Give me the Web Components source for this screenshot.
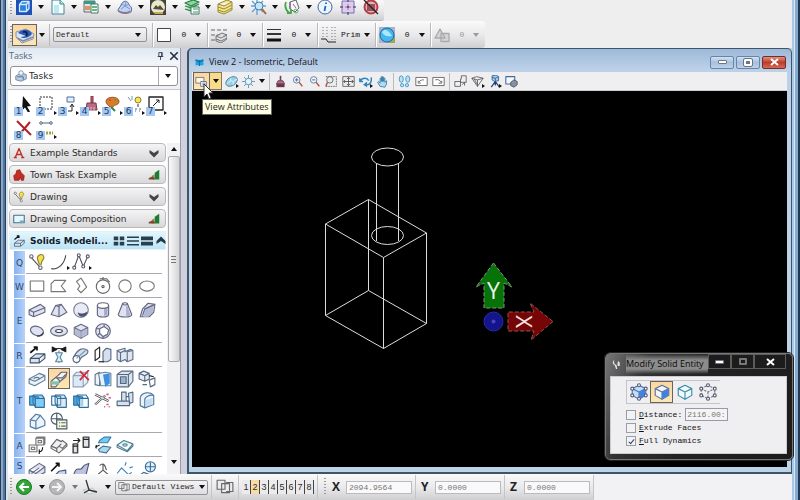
<!DOCTYPE html>
<html lang="en">
<head>
<meta charset="utf-8">
<title>View 2 - Isometric, Default</title>
<style>
html,body{height:100%;margin:0}
body{font:9px/12px "DejaVu Sans",sans-serif;color:#2b2b2b;background:#efeeef;overflow:hidden;
--mono:8px/12px "Liberation Mono",monospace;--segoe:"Open Sans",sans-serif;--bar:linear-gradient(#fbfafb,#e8e7e9 55%,#cfced0);--line:#b5b4b8}
</style>
</head>
<body>
<cad-app></cad-app>
<script>
const solid = 'stroke="#62667f" fill="#dfe2f2"';
const cube = (c, f) => `<g stroke="${c}" fill="${f}"><path d="M2 5l6-3 6 3v6l-6 3.500-6-3.500z"/><path d="M2 5l6 3 6-3M8 8v6.500" fill="none"/></g>`;
const overlap = (a, b) => `<path d="M1.500 4.500h8v8h-8z" fill="${a}" stroke="#2c6e9e"/><path d="M6.500 6.500h8v8h-8zM6.500 6.500l-2-3M14.500 6.500l-2-3h-8M4.500 3.500v7l2 4" fill="${b}" stroke="#2c6e9e"/>`;
const node = (x, y) => `<circle cx="${x}" cy="${y}" r="1.300" fill="#fff" stroke="#555a70"/>`;
const mag = '<path d="M10 9l4 5" stroke="#b4583c" stroke-width="1.800"/><circle cx="7" cy="6" r="4" fill="#eef5ff" stroke="#59698c"/>';
const ICONS = {
  model: '<path d="M0 0h16v16H0z" fill="#1d50b8"/><path d="M3.500 5.500h7v7h-7zM3.500 5.500l2.500-3h7l-2.500 3M13 2.500v7l-2.500 3" fill="#2f7fe0" stroke="#c9ecff" stroke-width="1.300"/>',
  page: '<path d="M2 1h8l4 4v10H2z" fill="#f4ffff" stroke="#4d7f96"/><path d="M10 1v4h4" fill="#9fc" stroke="#4d7f96"/><path d="M4 6h5v8H4z" fill="#bdeaf0"/>',
  refs: '<path d="M1 2h11v11H1z" fill="#d5ecdb" stroke="#667"/><path d="M1 2h11v3H1z" fill="#3a9a83"/><path d="M2 7h5v4H2z" fill="#e6906a"/><path d="M8 5h7v9H8z" fill="#fff" stroke="#476"/><path d="M9 8h5M9 11h5" stroke="#35a552" stroke-width="1.500"/>',
  cloud: '<path d="M1 12c0-3 2-3 3-6 2-5 7-5 8 0 3 2 3 4 2 7-3 2-10 2-13-1z" fill="#b7d7f2" stroke="#5d6298"/><path d="M4 10l4-3 5 3M8 7l1-4M5 5l3 2 4-2" stroke="#8c90c8"/><path d="M2 12c4 2 8 2 11 0" stroke="#b64d63"/>',
  raster: '<path d="M0 0h16v16H0z" fill="#44443d"/><circle cx="8" cy="8" r="7" fill="#e9e8cc"/><path d="M3 10l3-4 2 2 2-2 4 5z" fill="#4d4f38"/><path d="M3 13h10v2H5z" fill="#c9a955"/>',
  levels: '<path d="M1 4l8-3 6 2-8 4zM1 7l6 2 8-4M1 10l6 2 8-4" fill="#8bd89b" stroke="#27834a" stroke-width="1.300"/><path d="M7 8h8v7H7z" fill="#fff" stroke="#476"/><path d="M9 10h5M9 13h5" stroke="#2a9d4f"/>',
  layers: '<path d="M1 5l9-4 5 2-8 4zM1 5v3l6 2 8-4V3M1 8v3l6 2 8-4V6M1 11v2l6 2 8-4V9" fill="#f2e58d" stroke="#9a8a33"/>',
  sunfind: '<path d="M6 0v16M0 7h15M1 2l11 11M12 2L1 13" stroke="#62a3db" stroke-width="1.400"/><circle cx="8" cy="7" r="4" fill="#c2e9fa" stroke="#4a7ca8"/><path d="M11 10l4 5" stroke="#a8653c" stroke-width="2"/>',
  rotview: '<path d="M6 3l6-2 3 8-4 4-5-3zM6 3v7" fill="#f6f8fb" stroke="#5a6672"/><path d="M2 3c-2 5 0 8 3 11M3 14h4v-4" stroke="#46a648" stroke-width="1.800"/><path d="M9 5l3 4" stroke="#d2506a"/><circle cx="12" cy="12" r="2" stroke="#5b6"/>',
  info: '<circle cx="8" cy="8" r="7" fill="#eaf6ff" stroke="#49658f"/><path d="M8.500 7l-1 5M9 3.500v1.500" stroke="#2b63c0" stroke-width="1.800"/>',
  snap: '<path d="M2 2h12v12H2z" fill="#d9cdf1" stroke="#7d6cae"/><path d="M8 5v6M5 8h6" stroke="#9078bd"/><path d="M8 0v3M8 13v3M0 8h3M13 8h3" stroke="#333"/><path d="M7 7h2v2H7z" fill="#b33"/>',
  nosnap: '<circle cx="8" cy="8" r="6.500" fill="#e3b3b5" stroke="#b3404a" stroke-width="2"/><path d="M4 5h8v7H4z" fill="#9a525c"/><path d="M1 1l14 14" stroke="#222" stroke-width="1.300"/>',
  template: '<path d="M1 5l10-3 8 5-1 5-11 4-6-6z" fill="#d7e3f2" stroke="#8494b0"/><path d="M3 6c5-5 12-4 14 1-3 4-9 5-11 3l5-1z" fill="#2858b8"/><path d="M8 5c4-1 5 2 3 4" stroke="#111c33" stroke-width="1.500"/><path d="M2 11l6 3 10-4" stroke="#7d8ba5" stroke-width="1.500"/>',
  color: '<path d="M1.500 1.500h13v13h-13z" fill="#fff" stroke="#444"/>',
  style: '<path d="M0 3h16M0 8h16M0 13h8" stroke="#666" stroke-dasharray="4 2"/><path d="M5 9l6-3 5 2v4l-6 4-5-2zM5 9l5 2 6-3M5 12l5 2 6-3" fill="#dedfe4" stroke="#777"/>',
  weight: '<path d="M1 2.500h14" stroke="#333"/><path d="M1 7h14" stroke="#333" stroke-width="2"/><path d="M1 13h14" stroke="#111" stroke-width="3"/>',
  priority: '<path d="M2 0v12M6 0v12M11 0v13M14 0v13" stroke="#777" stroke-dasharray="1 2"/><path d="M0 12h5l2 3h8" stroke="#222"/>',
  trans: '<path d="M0 0h16v16H0z" fill="#a9b2cf"/><path d="M9 9h7v7H9z" fill="#98a95d"/><circle cx="8" cy="8" r="7" fill="#45b7ee" stroke="#19699e"/><path d="M3 5c3-5 8 0 10 4-5 1-8 0-10-4z" fill="#a9e8ff"/>',
  shapes: '<path d="M7 6.500h8v8H7zM1 11l5-9 5 9z" fill="#d4d3d6" stroke="#aaa" stroke-width="1.300"/>',
  person: '<path d="M1 8l7-4 7 2v6l-7 3-7-2z" fill="#b9cce1" stroke="#5f7691"/><circle cx="8" cy="4" r="3" fill="#f3f8fc" stroke="#6c84a1"/><path d="M3 9h8v4" stroke="#30597f"/>',
  pin: '<path d="M5 1h6v7H5zM3 8h10M8 8v6M10 1v7" stroke="#28364a" stroke-width="1.500"/>',
  cross: '<path d="M2 2l12 12M14 2L2 14" stroke="#222e40" stroke-width="2.500"/>',
  arrow: '<path d="M7 0l8 10-4 .5 3 5-2 1-3-5-3 3z" fill="#111"/>',
  fence: '<path d="M2 1h12v12H2z" stroke="#333" stroke-dasharray="2 1"/>',
  move: '<path d="M7 1h7v5H7z" fill="#e3eefb" stroke="#4e719d"/><path d="M8 15h4V9M10 11l2-3 2 3" stroke="#222"/>',
  brush: '<path d="M9 0h2v7H9z" fill="#d3606d" stroke="#842f3f"/><path d="M5 7h9l1 7H4z" fill="#b86d80" stroke="#743a53"/><path d="M6 11v4M9 11v4M12 11v4" stroke="#e9bac5"/>',
  palette: '<path d="M2 5c1-5 12-5 13 0 0 5-5 3-6 6-1 2-7-2-7-6z" fill="#d97b2a" stroke="#9b5420"/><circle cx="6" cy="4" r="1" fill="#e33"/><circle cx="11" cy="4" r="1" fill="#4a4"/><path d="M7 11l4 4" stroke="#384" stroke-width="2"/>',
  lights: '<path d="M2 1l3 4M6 0v4M10 3" stroke="#69a"/><circle cx="12" cy="4" r="3" fill="#f6e65a" stroke="#8d802e"/><path d="M11 8h2v3h-2z" fill="#999"/><path d="M9 13h2M13 13h2M9 15h1M13 15h1" stroke="#568"/>',
  scale: '<path d="M1 1h14v13H1z" stroke="#222" stroke-width="1.300"/><path d="M5 10l6-6M8 4h3v3" stroke="#222"/>',
  del: '<path d="M1 1l14 14M14 2L3 15" stroke="#b3202b" stroke-width="2"/>',
  measure: '<path d="M3 3h10" stroke="#567"/><circle cx="3" cy="3" r="1.300" fill="#fff" stroke="#567"/><circle cx="13" cy="3" r="1.300" fill="#fff" stroke="#567"/><path d="M5 13h10" stroke="#a7a13c" stroke-width="3" stroke-dasharray="2 1"/>',
  letterA: '<path d="M3 14L8 2l5 12M5 10h6M1 14h4M11 14h4" stroke="#c03026" stroke-width="1.800"/>',
  town: '<path d="M2 15L1 9l3-3 1-4 4-1 2 4 4 4-1 6h-3l-1-4-2 4z" fill="#c42d22" stroke="#8a1b17"/>',
  draw: '<path d="M2 3l9 10" stroke="#555"/><circle cx="3" cy="3" r="1.500" fill="#fff" stroke="#667"/><circle cx="11" cy="13" r="1.500" fill="#fff" stroke="#667"/><path d="M9 7c-3-6 6-8 5-2l-2 3v2h-2z" fill="#f3e04c" stroke="#8c8135"/>',
  sheet: '<path d="M1 3h14v10H1z" fill="#e8f6ff" stroke="#3c7491" stroke-width="1.400"/><path d="M9 10h6v3H9z" fill="#7ab"/>',
  extrude: '<path d="M2 6l6-5M5 1h3v3" stroke="#111" stroke-width="1.500"/><path d="M2 11l5-4h8l-5 4zM2 11v4h8v-4M10 15l5-4V7" fill="#d9e3ef" stroke="#42536d"/>',
  chevdown: '<path d="M2 4l6 4 6-4v4l-6 6-6-6z" fill="#444"/>',
  chevup: '<path d="M2 12l6-4 6 4V8L8 2 2 8z" fill="#24384b"/>',
  stairs: '<path d="M9 5l6-4v13H9z" fill="#1f7a34"/><path d="M5 9l4-2v7H5z" fill="#77a44a"/><path d="M1 12l5-2 3 2v2H1z" fill="#8b3d37"/>',
  grid4: '<path d="M1 2h6v5H1zM9 2h6v5H9zM1 9h6v5H1zM9 9h6v5H9z" fill="#273f4e"/>',
  list: '<path d="M0 3h16M0 8h16M0 13h16" stroke="#273f4e" stroke-width="2"/>',
  wide: '<path d="M0 2h16v5H0zM0 9h16v5H0z" fill="#273f4e"/>',
  arc: '<path d="M1 14c7 1 12-5 13-12" stroke="#444"/>',
  curve: '<path d="M2 13L6 2l4 10 4-9" stroke="#555"/>'+node(2,13)+node(6,2)+node(10,12)+node(14,3),
  rect: '<path d="M2 3.500h12v9H2z" stroke="#777"/>',
  poly: '<path d="M1 13V6l3-3h10l-4 5 4 5z" stroke="#777"/>',
  orth: '<path d="M4 4l4-3 2 3 3 5-5 5-3-3 2-3z" stroke="#777"/>',
  regpoly: '<circle cx="8" cy="8.500" r="6" stroke="#666"/><circle cx="8" cy="8.500" r="1" stroke="#555"/><path d="M8 2.500V0M5 1.500h6l3 3" stroke="#666"/>',
  circle: '<circle cx="8" cy="8" r="5.500" stroke="#777"/>',
  ellipse: '<ellipse cx="8" cy="8" rx="6.500" ry="4.500" stroke="#777"/>',
  slab: `<path d="M1 8l10-5 4 3v4L5 14l-4-2z" ${solid}/><path d="M1 8l4 2 10-4M5 10v4" stroke="#62667f"/>`,
  wedge: `<path d="M1 12l4-8 5-1 5 7-7 4z" ${solid}/><path d="M5 4l3 1 2-2M8 5v9" stroke="#62667f"/>`,
  sphere: '<circle cx="8" cy="8" r="6.500" fill="#e8eaf6" stroke="#7b7f98"/><path d="M5 10c3 2 6 1 9-1-1 6-8 7-9 1z" fill="#4d5270"/>',
  cylinder: `<path d="M3 4v8c0 3 10 3 10 0V4" ${solid}/><path d="M9 5h3v8H9z" fill="#a4a8c4"/><ellipse cx="8" cy="4" rx="5" ry="2.500" fill="#fff" stroke="#62667f"/>`,
  cone: `<path d="M6 2L2 12c0 3 12 3 12 0L10 2z" ${solid}/><path d="M9 4h1l3 9-4 1z" fill="#aeb2cc"/><ellipse cx="8" cy="2.500" rx="2" ry="1" fill="#fff" stroke="#62667f"/>`,
  quad: `<path d="M2 14l2-7 5-5 6 1-1 7-4 4z" ${solid}/><path d="M6 7l8-4-1 7-4 4H5z" fill="#b3b8d6"/><path d="M4 13l2-6 9-4" stroke="#62667f"/>`,
  ellipsoid: `<ellipse cx="8" cy="8" rx="6" ry="4" transform="rotate(20 8 8)" ${solid}/><path d="M8 12.500c3 0 5-1 5.500-3" stroke="#444" stroke-width="1.300"/>`,
  torus: `<ellipse cx="8" cy="8" rx="7.500" ry="4.500" ${solid}/><ellipse cx="8" cy="8" rx="3" ry="1.300" fill="#fff" stroke="#444"/>`,
  cube: cube('#6b6e88', '#e3e5f2') + '<path d="M8.500 8.500l5-2.500v5l-5 3zM2.500 6L7.500 8.500V14l-5-3z" fill="#b5b9d2"/>',
  dodeca: `<circle cx="8" cy="8" r="6.500" ${solid}/><path d="M5 6l4-2 4 3-1 4-4 2-3-3zM5 6L2 6M9 4V2M5 10l-2 2M8 13v2" fill="#fff" stroke="#62667f"/>`,
  revolve: '<path d="M2 3c4-1 8-1 12 0" stroke="#222"/><path d="M2 1v4l4-2zM14 1v4l-4-2z" fill="#111" stroke="#222"/><path d="M8 4v11" stroke="#58a"/><path d="M5 6h6l-2 4 2 4H5l2-4z" fill="#dfeaf5" stroke="#56889a"/>',
  pipe: '<path d="M1 11C5 2 10 1 14 4c1 3-2 4-4 5-3 1-3 5-6 6z" fill="#d7dfef" stroke="#596984"/><circle cx="4" cy="11.500" r="3" fill="#fff" stroke="#596984"/><path d="M4 11l8-7" stroke="#79a"/>',
  sweep: '<path d="M1 4l4-3v9l-4 3z" stroke="#222"/><path d="M8 5l3-3 4 1v9l-3 2H8z" fill="#d7dfef" stroke="#596984"/><path d="M4 14h5" stroke="#222"/>',
  thicken: '<path d="M1 4l7-2v3l5-2 2 1v8l-5 2-2-2-4 2-3-2z" fill="#dfe6f2" stroke="#5f6e88"/><path d="M1 4l3 2 4-2M4 6v8M10 5v9M10 5l5-1" stroke="#5f6e88"/>',
  slab2: '<path d="M1 8l9-5 5 2v4L6 14l-5-2z" fill="#ecf1f7" stroke="#5a7c98"/><path d="M1 8l5 2 4-2 5-3M5 8c1-2 5-2 5 0" stroke="#5a7c98"/>',
  modify: '<path d="M1 10l6-5 3-3h5l-1 4-5 4-4 5H1z" fill="#eff3f6" stroke="#68606c"/><path d="M5 7h6l3-3M9 10l-3-3" stroke="#68606c"/><path d="M1 10h7v3H1z" fill="#81c4ab"/>',
  delent: '<path d="M1 5h9v10H1zM1 5l3-3h10l-4 3M14 2v9l-4 4" fill="#dce9f6" stroke="#8fa3bb"/><path d="M7 1l8 8M15 0L7 9" stroke="#d22a3a" stroke-width="1.600"/>',
  fillet: '<path d="M1 4l4-2v12l-4-1z" fill="#eef3f8" stroke="#57728f"/><path d="M4 3l6-1 5 1v11H6z" fill="#eaf3fb" stroke="#6d869f"/><path d="M8 4l6-1v9l-4 3z" fill="#3f8fe0"/>',
  shell: '<path d="M1 4l4-3h10v9l-4 5H1z" fill="#dce5f0" stroke="#566a82"/><path d="M1 4h10v11M11 4l4-3" stroke="#566a82"/><path d="M4 6h5v6H4z" fill="#9bb2cc" stroke="#566a82"/>',
  cutout: '<path d="M1 3l4-2 5 2v5l-4 2-5-2zM1 3l5 2 4-2M6 5v5" fill="#e7edf4" stroke="#566a82"/><path d="M10 9l5-2v6l-4 2zM4 13h4" stroke="#566a82"/><path d="M10 5l4 1" stroke="#222"/>',
  unite: overlap('#56b5ee', '#81cdf6'),
  intersect: overlap('#fff', '#a9c9e266'),
  subtract: overlap('#45a8e8', '#f7fbff99'),
  trim: '<path d="M1 3l12 6M1 12l9-8" stroke="#555" stroke-width="2"/><path d="M1 3l12 6M1 12l9-8" stroke="#fff" stroke-width=".8"/><path d="M11 3h2M13 6h2M11 12h2M13 14h1M9 14h1" stroke="#d3557d" stroke-width="1.500"/>',
  imprint: '<path d="M5 1h4v8H5zM11 2l4-1v9l-3 1zM1 9h11v4H1zM9 5h3" fill="#d7e2ed" stroke="#536a84"/>',
  blend: '<path d="M2 6c1-5 9-6 12-2v8l-8 3-4-2z" fill="#ecf4fb" stroke="#5178a0"/><path d="M6 15V8c0-3 5-5 8-4" stroke="#5178a0"/><path d="M7 14V8l6-2v6z" fill="#c6ddf1"/>',
  chamfer: '<path d="M2 7l5-5 4 1 4 5v4l-8 3-5-2z" fill="#ecf4fb" stroke="#5178a0"/><path d="M2 7l5 1 4-5M7 8v7" stroke="#5178a0"/>',
  props: '<circle cx="6" cy="6" r="5" stroke="#46596b"/><path d="M1 6h9M6 1v9" stroke="#46596b"/><path d="M6 7h9v8H6z" fill="#f6f8dc" stroke="#46596b"/><path d="M8 9.500h1M8 12.500h1M10 9.500h4M10 12.500h4" stroke="#566"/>',
  align: '<path d="M7 2h7v6H7zM1 8h7v6H1zM7 2l1-1h7v6l-1 1M9 4h3v2H9zM3 10h3v2H3z" fill="#f4f4f6" stroke="#777"/><path d="M13 10c0 3-1 4-3 4M10 12v4" stroke="#111"/>',
  unfold: '<path d="M1 9l5-6 4 2 1-1 4 3v2l-7 6-7-4z" fill="#f0f1f3" stroke="#666"/><path d="M1 9l5 2 4-4M6 11v3M8 9l3 2 4-4" stroke="#666"/>',
  copy: '<path d="M1 7h4v8H1zM10 1h5v9h-5z" fill="#dfe5ec" stroke="#444" stroke-width="1.300"/><path d="M1 4h6M5 2l2 2-2 2M1 9h4M10 3h5" stroke="#222"/>',
  project: '<path d="M5 4l4-3h6l-3 5H4z" fill="#75c9f4" stroke="#3382ae"/><path d="M4 12l4-3 7 1-4 5-6-1z" fill="#a7daf1" stroke="#4c6f8c"/><path d="M1 10l4-2M2 8v3" stroke="#222"/>',
  flat: '<path d="M1 8l6-4 8 3-5 6zM1 8v2l9 4 5-5V7" fill="#e4f5f8" stroke="#4e8192"/><ellipse cx="8" cy="8" rx="2" ry="1" stroke="#4e8192"/>',
  surf: '<path d="M1 9l9-6 5 3v5l-8 4H1zM1 9l6 3 8-6M3 12l7-5" fill="#dfe3f1" stroke="#626a86"/>',
  lineArrow: '<path d="M1 10l7-7M5 3h3v3" stroke="#111" stroke-width="1.400"/><path d="M3 15l5-5 6-1v6z" fill="#ccd2ea" stroke="#505878"/>',
  mound: '<path d="M1 15C4 3 7 11 9 7s5-3 6-4l-3 12z" fill="#bcc2df" stroke="#505878"/>',
  bend: '<path d="M1 15l7-6V3M8 9l6 5M5 5c3-3 5-1 6 4" stroke="#555"/>',
  spark: '<path d="M1 12l4-5 6 6 3-2M8 5l1-3M12 7l3-1" stroke="#3c83b5"/>',
  mesh: '<circle cx="11" cy="6" r="4.500" stroke="#386b95" fill="#dff3ff"/><path d="M7 6h8M11 2v8M1 14l4-3 8 3" stroke="#386b95"/>',
  attr: '<path d="M1 3h10v7H1z" fill="#fff7df" stroke="#667"/><path d="M7 8h7v6H7z" fill="#fff" stroke="#667"/><path d="M9 10h4M9 12h4" stroke="#2a74c8"/>',
  display: '<path d="M1 11c0-5 4-8 9-9 6 0 6 4 4 7-3 5-11 7-13 2z" fill="#9bd0ea" stroke="#336e8e"/><path d="M2 11l5-4 3 1 5-3M7 7V4M10 8v4" stroke="#e4f7ff"/>',
  sun: '<path d="M8 0v16M0 8h16M2.500 2.500l11 11M13.500 2.500l-11 11" stroke="#5b83a3"/><circle cx="8" cy="8" r="4" fill="#e2f4ff" stroke="#4987ac"/>',
  update: '<path d="M7 1h2v6H7z" fill="#6d414f"/><path d="M5 7h6l2 4H3z" fill="#aa7182" stroke="#62394a"/><path d="M3 11h10v4H3z" fill="#71324f"/>',
  zoomin: mag + '<path d="M5 6h4M7 4v4" stroke="#2656a8"/>',
  zoomout: mag + '<path d="M5 6h4" stroke="#2656a8"/>',
  window: '<path d="M1 2h13v12H1" stroke="#555" stroke-dasharray="2 1"/><circle cx="6" cy="6" r="4" fill="#e4eaf3" stroke="#555"/><path d="M3 9l-2 5" stroke="#b4583c" stroke-width="1.800"/>',
  fit: '<path d="M1 2h14v12H1z" stroke="#555"/><path d="M8 3v10M2 8h12M6 5l2-2 2 2M6 11l2 2 2-2M4 6L2 8l2 2M12 6l2 2-2 2" stroke="#444"/>',
  rotate: '<path d="M1 8c3-5 9-5 11-1M1 4v4h4M15 3c1 6-2 10-7 9" stroke="#2f86bd" stroke-width="1.800"/><path d="M10 8v7l-5-3z" fill="#2f86bd"/>',
  hand: '<path d="M5 14L2 9l1-1 2 2V4h1.500v4V2H8v6V2.500h1.500V8V4H11v5l2-2v4l-2 4z" fill="#acdcf6" stroke="#3776a2"/>',
  walk: '<ellipse cx="4" cy="5" rx="2.500" ry="4" fill="#b9e3f8" stroke="#3a8bbc"/><ellipse cx="12" cy="5" rx="2.500" ry="4" fill="#b9e3f8" stroke="#3a8bbc"/><circle cx="5" cy="12.500" r="2" fill="#b9e3f8" stroke="#3a8bbc"/><circle cx="11" cy="12.500" r="2" fill="#b9e3f8" stroke="#3a8bbc"/>',
  prev: '<path d="M1 3h14v10H1z" fill="#fff" stroke="#555"/><path d="M5 9c1-3 4-3 6-3M4 7v3h3" stroke="#555"/>',
  next: '<path d="M1 3h14v10H1z" fill="#fff" stroke="#555"/><path d="M4 6c3-1 6 0 7 3M8 10h4V7" stroke="#555"/>',
  copyview: '<path d="M1 8h7v6H1zM9 1h6v8H8V5h1zM10 12l3-3M13 9v4" stroke="#555"/>',
  clip: '<path d="M1 4l6-2 8 2-7 10zM1 4l7 2 7-2M8 6v8M4 5l4 7" stroke="#555"/>',
  camera: '<path d="M5 1l5-1 3 2v5l-5 1-3-2z" fill="#a9cced" stroke="#27598e"/><path d="M5 3l4 1 4-2M9 4v4" stroke="#27598e"/><path d="M9 8l-5 7M9 8l5 7M9 8v5" stroke="#1f3f70" stroke-width="1.500"/>',
  mask: '<path d="M1 2h11v9H1z" fill="#f6f8ff" stroke="#456a91" stroke-width="1.300"/><path d="M7 9l4-3 4 2v4l-4 3-4-2z" fill="#8792a0" stroke="#43505f"/>',
  back: '<circle cx="8" cy="8" r="7.500" fill="#30a436" stroke="#197a24"/><path d="M13 8H4M8 4L4 8l4 4" stroke="#fff" stroke-width="2"/>',
  fwd: '<circle cx="8" cy="8" r="7.500" fill="#b7b7b9" stroke="#99999d"/><path d="M3 8h9M8 4l4 4-4 4" stroke="#f4f4f4" stroke-width="2"/>',
  acs: '<path d="M1 11l6 4 8-2-5-4z" stroke="#bcc" fill="#ececf1"/><path d="M4 1l3 10 8 2M7 11l-5 3" stroke="#333" stroke-width="1.300"/>',
  views: '<path d="M1 2h7v8H1zM5 5h7v8H5zM9 4h6v8H9" fill="#ececee" stroke="#666"/>',
  app: '<path d="M1 3h6l1 1 1-1h6v10H9l-1 1-1-1H1z" fill="#1aa6d8"/><path d="M8 4v10M1 3l7 4 7-4" stroke="#1766a8" stroke-width="2"/>',
  pick: '<path d="M5 1c-3 4-3 7 1 9l2 6h2l-1-6-4-3zM12 3c-2 3-2 5-1 8h3V6z" fill="#e4e4e4"/>',
  faceVert: cube('#5179b5', '#c3dcf8') + '<path d="M8 8l6-3v6l-6 3.500z" fill="#4582de"/>' + node(2,5)+node(8,2)+node(14,5)+node(2,11)+node(8,14)+node(14,11),
  face: cube('#61749d', '#f2f5fb') + '<path d="M8 8l6-3v6l-6 3.500z" fill="#437fdf"/>',
  edge: cube('#388cad', '#f3fbfd'),
  vertex: '<path d="M2 5l6-3 6 3v6l-6 3-6-3zM2 5l6 3 6-3M8 8v6" stroke="#778" stroke-dasharray="2 1"/>' + node(2,5)+node(8,2)+node(14,5)+node(2,11)+node(8,14)+node(14,11)
};

const define = (name, html) => {
  const tpl = document.createElement('template');
  customElements.define(name, class extends HTMLElement {
    constructor() { super(); this.attachShadow({ mode: 'open' }); }
    connectedCallback() {
      if (this.shadowRoot.firstChild) return;
      tpl.innerHTML = '<style>*{box-sizing:border-box}:host{display:block;box-sizing:border-box}button{font:inherit;color:inherit;margin:0;padding:0;border:0;background:none}</style>' + (typeof html === 'function' ? html(this) : html);
      this.shadowRoot.append(tpl.content.cloneNode(true));
    }
  });
};
const a = (el, n, d = '') => el.getAttribute(n) ?? d;

define('ui-icon', el => `<style>:host{display:block;flex:none;width:${a(el,'size','16')}px;height:${a(el,'size','16')}px}svg{display:block;width:100%;height:100%;fill:none;stroke-linejoin:round}</style>
<svg viewBox="0 0 ${a(el,'name')==='template'?20:16} 16" aria-hidden="true">${ICONS[a(el,'name')]}</svg>`);

define('drop-arrow', el => `<style>:host{display:flex;flex:none}button{width:9px;height:16px;display:grid;place-items:center}i{border:3px solid transparent;border-top:4px solid ${a(el,'tone','#111')};border-bottom:0}</style><button aria-label="${a(el,'label','More')}"><i></i></button>`);

define('tool-button', el => `<style>:host{position:relative;flex:none}
button{display:grid;place-items:center;place-content:center;width:${a(el,'w','22')}px;height:${a(el,'h','22')}px;border:1px solid transparent}
:host([active]) button{border-color:#6a645c;background:linear-gradient(#fbd7a2,#fbe7b4)}
b{position:absolute;left:1px;bottom:1px;width:9px;height:9px;background:#a5c8f2;color:#173a67;font:9px/9px "DejaVu Sans",sans-serif;text-align:center}
i{position:absolute;right:0;bottom:2px;border:2px solid transparent;border-left:3px solid #111;border-right:0}</style>
<button aria-label="${a(el,'label',a(el,'icon'))}"><ui-icon name="${a(el,'icon')}" size="${a(el,'size','16')}"></ui-icon></button>${el.hasAttribute('key')?`<b>${a(el,'key')}</b>`:''}${el.hasAttribute('fly')?'<i></i>':''}`);

define('grip-dots', `<style>:host{width:2px;height:18px;flex:none;background:repeating-linear-gradient(#999 0 1px,transparent 1px 3px)}</style>`);

define('drop-select', el => `<style>:host{min-width:0}
label{display:grid;grid-template-columns:auto 1fr auto;align-items:center;height:${a(el,'h','15')}px;border:1px solid #929196;border-radius:${a(el,'radius','2')}px;background:${a(el,'bg','linear-gradient(#f4f3f4,#dedde0)')};overflow:hidden}
ui-icon{margin-left:${a(el,'im','2')}px}select{appearance:none;width:100%;min-width:0;border:0;background:none;font:inherit;color:inherit;padding:0 2px;height:12px}
span{display:grid;place-items:center;height:100%;width:${a(el,'aw','16')}px;${el.hasAttribute('split')?'border-left:1px solid #aab;':''}}span i{border:${a(el,'tri','3')}px solid transparent;border-top:4px solid #111;border-bottom:0}</style>
<label>${el.hasAttribute('icon')?`<ui-icon name="${a(el,'icon')}" size="${a(el,'isize','12')}"></ui-icon>`:'<s></s>'}<select aria-label="${a(el,'label')}"><option>${a(el,'value')}</option></select><span><i></i></span></label>`);

define('attr-group', el => `<style>:host{display:grid;grid-template-columns:18px 1fr 9px;align-items:center;gap:2px;padding:0 4px 0 3px;border-left:1px solid #b9b8bc;box-shadow:inset 1px 0 #fff;height:24px;font:var(--mono);color:${a(el,'tone','#111')}}span{text-align:center}</style>
<ui-icon name="${a(el,'icon')}"></ui-icon><span>${a(el,'value','0')}</span><drop-arrow tone="${a(el,'tone','#111')}" label="${a(el,'icon')}"></drop-arrow>`);

define('top-bars', () => {
  const drops = ['model','page','refs','cloud','raster','levels','layers','sunfind','rotview'];
  return `<style>.r{display:flex;align-items:center;background:var(--bar);border-radius:0 3px 3px 0;padding-left:2px}
.one{width:376px;height:21px;padding-bottom:6px;border-bottom:1px solid #bcbbc0}.two{width:477px;height:27px}
.g{flex:1;display:grid;grid-template-columns:repeat(9,1fr);margin-left:3px}.g>div{display:flex;align-items:center;gap:3px}.x{display:flex;gap:7px;padding-right:5px}
.sel{width:94px;font:var(--mono)}.sp{width:1px;height:22px;background:#b9b8bc;margin:0 3px}.a{flex:1;display:grid;grid-template-columns:repeat(6,1fr);margin-left:5px}</style>
<div class="r one"><grip-dots></grip-dots><div class="g">${drops.map(n=>`<div><tool-button icon="${n}" w="18" h="16"></tool-button><drop-arrow></drop-arrow></div>`).join('')}</div>
<div class="x">${['info','snap','nosnap'].map(n=>`<tool-button icon="${n}" w="16" h="16"></tool-button>`).join('')}</div></div>
<div class="r two"><grip-dots></grip-dots><tool-button active icon="template" size="20" w="25" h="22" label="Active template"></tool-button><drop-arrow></drop-arrow><i class="sp"></i>
<drop-select class="sel" label="Active level" value="Default"></drop-select>
<div class="a"><attr-group icon="color"></attr-group><attr-group icon="style"></attr-group><attr-group icon="weight"></attr-group><attr-group icon="priority" value="Prim"></attr-group><attr-group icon="trans"></attr-group><attr-group icon="shapes" tone="#9b9a9e"></attr-group></div></div>`;
});

define('task-category', el => `<style>button{width:100%;height:19px;display:grid;grid-template-columns:12px 1fr auto;gap:5px;align-items:center;padding:0 5px 0 3px;text-align:left;white-space:nowrap;border:1px solid #b9b8bb;border-radius:4px;background:linear-gradient(#f5f4f5,#d9d8da)}
:host([open]) button{border-color:#e2f3fb;border-radius:0;background:linear-gradient(#e3f6fd,#bde4f5);font-weight:bold;color:#10202c}
.e{display:flex;gap:2px;align-items:center}</style>
<button aria-expanded="${el.hasAttribute('open')}"><ui-icon name="${a(el,'icon')}" size="12"></ui-icon><slot></slot><span class="e">${a(el,'end').split(' ').map(n=>`<ui-icon name="${n}" size="12"></ui-icon>`).join('')}</span></button>`);

define('task-row', el => `<style>:host{display:grid;grid-template-columns:11px 1fr}
b{display:grid;place-items:center;background:linear-gradient(90deg,#86b3f1,#b8d2f8);color:#33456a;font-weight:normal}
:host([last]) b{place-items:start center;padding-top:2px}
div{display:grid;grid-template-columns:repeat(6,22px);grid-auto-rows:21px;margin-left:1px;padding-bottom:1px;border-bottom:1px solid #a9a8ae}</style>
<b>${a(el,'key')}</b><div>${a(el,'icons').split(' ').map(n=>{const [i,f]=n.split(':');return `<tool-button icon="${i}" size="18" h="21" ${f==='on'?'active':f==='fly'?'fly':''}></tool-button>`}).join('')}</div>`);

define('task-panel', () => `<style>:host{display:flex;flex-direction:column;min-height:0;background:#fff;border-right:1px solid #9a99aa}
header{display:flex;align-items:center;gap:4px;height:16px;flex:none;padding:0 1px 0 1px;color:#50647c;background:linear-gradient(#dfe8f1,#f3f6fa);font-family:var(--segoe)}header span{flex:1}
.top{padding:2px 2px 3px;background:#eff1f5;border-bottom:1px solid #c9c8cc}
.keys{display:grid;grid-template-columns:repeat(7,22px);grid-auto-rows:24px;padding:3px 5px 0;height:53px;flex:none}
.body{flex:1;min-height:0;display:grid;grid-template-columns:1fr 13px;gap:1px;padding-left:1px}
.cats{min-height:0;overflow:hidden;display:flex;flex-direction:column;gap:3px}.rows{margin:-2px 4px 0 5px;display:grid;gap:1px}
.sb{display:flex;flex-direction:column;align-items:center;background:#f2f1f3;padding:4px 0 10px}.u{border:3px solid transparent;border-bottom:4px solid #111;border-top:0}.d{border:3px solid transparent;border-top:4px solid #111;border-bottom:0}
.t{width:12px;height:206px;margin-top:5px;border:1px solid #a9a8ac;border-radius:2px;background:linear-gradient(90deg,#fafafa,#d5d4d7);display:grid;place-items:center}.t i{width:5px;height:7px;background:repeating-linear-gradient(#777 0 1px,transparent 1px 3px)}.f{flex:1}</style>
<header><span>Tasks</span><tool-button icon="pin" size="9" w="9" h="12" label="Pin"></tool-button><tool-button icon="cross" size="10" w="10" h="12" label="Close"></tool-button></header>
<div class="top"><drop-select icon="person" im="4" label="Task" value="Tasks" h="20" radius="3" bg="#fff" aw="19" split></drop-select></div>
<div class="keys">${['arrow','fence','move','brush','palette','lights','scale','del','measure'].map((n,i)=>`<tool-button icon="${n}" key="${i+1}" ${i&&i!==7?'fly':''}></tool-button>`).join('')}</div>
<div class="body"><div class="cats">
<task-category icon="letterA" end="chevdown">Example Standards</task-category>
<task-category icon="town" end="stairs">Town Task Example</task-category>
<task-category icon="draw" end="chevdown">Drawing</task-category>
<task-category icon="sheet" end="stairs">Drawing Composition</task-category>
<task-category open icon="extrude" end="grid4 list wide chevup">Solids Modeli...</task-category>
<div class="rows">
<task-row key="Q" icons="draw arc:fly curve:fly"></task-row>
<task-row key="W" icons="rect poly orth regpoly circle ellipse"></task-row>
<task-row key="E" icons="slab wedge sphere cylinder cone quad ellipsoid torus cube dodeca"></task-row>
<task-row key="R" icons="extrude revolve pipe sweep thicken"></task-row>
<task-row key="T" icons="slab2 modify:on delent fillet shell cutout unite intersect subtract trim imprint blend chamfer props"></task-row>
<task-row key="A" icons="align unfold copy project flat"></task-row>
<task-row key="S" last icons="surf lineArrow mound bend spark mesh"></task-row>
</div></div><div class="sb"><i class="u"></i><div class="t"><i></i></div><div class="f"></div><i class="d"></i></div></div>`);

define('cad-scene', `<style>:host{background:#000;min-height:0;overflow:hidden}svg{display:block;width:100%;height:100%}</style>
<svg role="img" aria-label="Wireframe solid with axis triad"><g transform="translate(-192 -91)">
<g fill="none" stroke="#dcdcdc" stroke-width="1"><path d="M325.500 224L368.500 199.500 426.500 233 383.500 257.500zM325.500 315.500L368.500 290.500 426.500 323.500 383.500 348.500zM325.500 224v91.500M368.500 199.500v91M426.500 233v90.500M383.500 257.500v91M376.500 163v78M398.500 163v78"/><ellipse cx="387.500" cy="157" rx="16" ry="9"/><ellipse cx="387.500" cy="235.500" rx="16" ry="9"/></g>
<g stroke-dasharray="4 2"><path d="M493.500 263L512 287l-8-4v25h-20v-25l-8 4z" fill="#077207" stroke="#7e967e"/><path d="M553 321.500L531 340l3-9h-26v-19h26l-4-9z" fill="#760606" stroke="#8e5555"/></g>
<circle cx="493.500" cy="321.500" r="9.500" fill="#14148c" stroke="#2929a5"/><circle cx="493.500" cy="321.500" r="2" fill="#4545c0"/>
<g fill="#e8f5e8" font-family="Open Sans,sans-serif" font-size="23" text-anchor="middle"><text x="493.500" y="299">Y</text><text transform="translate(516 321.500) rotate(90)" fill="#f5e3e3" font-size="22">X</text></g>
</g></svg>`);

define('window-buttons', el => {
  const dark = el.hasAttribute('dark');
  return `<style>:host{display:flex;gap:${dark?0:2}px}button{display:grid;place-items:center;width:${dark?23:24}px;height:${dark?15:13}px;border:1px solid ${dark?'#5c5c5c':'#6a84a5'};border-radius:${dark?0:2}px;background:${dark?'#1c1c1c':'linear-gradient(#d3e2f4,#a6c0de 50%,#bdd2ea)'}}
.c{${dark?'width:32px':'background:linear-gradient(#dc9285,#bd3b29 50%,#d46b55);border-color:#772b2b'}}
i{display:block;width:9px;height:4px;background:#fff;border:1px solid #6b7787;border-radius:1px}.m{height:7px;width:8px;background:${dark?'none':'#6b7787'};border:2px solid ${dark?'#777':'#fff'};outline:1px solid ${dark?'transparent':'#6b7787'}}
svg{width:9px;height:8px}path{fill:none;stroke:#fff;stroke-width:2}</style>
<button aria-label="Minimize"><i></i></button><button aria-label="Maximize"><i class="m"></i></button><button class="c" aria-label="Close"><svg viewBox="0 0 9 8"><path d="M1 1l7 6M8 1L1 7"/></svg></button>`;
});

define('view-window', () => `<style>:host{position:relative;display:flex;flex-direction:column;min-width:0;min-height:0;border:1px solid #3e5468;border-width:1px 1px 2px 2px;border-radius:5px 5px 0 0;background:linear-gradient(#9db8d8,#bcd1e8 20px,#bcd4e8);padding:3px 4px 5px 3px}
header{display:flex;align-items:center;gap:5px;height:20px;flex:none;padding:0 1px 0 3px;font:9px/14px var(--segoe);color:#112}header span{flex:1}
.tb{display:flex;align-items:center;gap:1px;height:19px;flex:none;background:#efeff1;border-bottom:1px solid #ccc;padding-left:1px}.tb s{width:1px;height:17px;background:#bbb;margin:0 1px 0 2px}
.on{display:flex}.on drop-arrow{border:1px solid #85775c;border-left:0;background:#f9db8c;padding:0 1px;height:18px}cad-scene{flex:1}
.tip{position:absolute;left:13px;top:50px;padding:0 2px;background:#ffffe4;border:1px solid #666;font:9px/14px var(--segoe);color:#222}
.cur{position:absolute;left:14px;top:34px;width:11px;height:17px}</style>
<header><ui-icon name="app" size="9"></ui-icon><span>View 2 - Isometric, Default</span><window-buttons></window-buttons></header>
<div class="tb"><div class="on"><tool-button active icon="attr" size="13" w="17" h="18" label="View Attributes"></tool-button><drop-arrow></drop-arrow></div>
${'display:f sun v | update zoomin zoomout window fit rotate:f hand | walk prev next | copyview clip:f camera:f mask'.split(' ').map(n=>{const [i,f]=n.split(':');return i==='|'?'<s></s>':i==='v'?'<drop-arrow></drop-arrow>':`<tool-button icon="${i}" size="13" w="16" h="18" ${f?'fly':''}></tool-button>`}).join('')}</div>
<cad-scene></cad-scene><div class="tip" role="tooltip">View Attributes</div>
<svg class="cur" viewBox="0 0 11 17"><path d="M1 1v13l3-3 2 5 2-1-2-5h4z" fill="#fff" stroke="#333"/></svg>`);

define('modify-dialog', () => `<style>:host{border:1px solid #777;outline:1px solid #222;border-radius:5px;background:linear-gradient(110deg,#777 0,#333 20%,#222 50%,#1c1c1c);padding:0 5px 5px 4px;width:188px}
header{display:flex;align-items:start;height:22px;margin-right:1px}header ui-icon{margin:5px 5px 0 1px}header span{flex:1;font:9px/20px var(--segoe);color:#080808;white-space:nowrap;background:linear-gradient(transparent,#8c8c8c 30% 75%,transparent)}
.b{background:#efeef0;border:1px solid #ccc;padding:3px 15px 6px;height:78px;font:var(--mono);color:#111}.i{display:flex;width:94px;border:1px solid #c5c5c9;border-right:0}
label{display:flex;align-items:center;gap:3px}.l{display:grid;grid-auto-rows:13px;margin-top:4px;align-items:center}.d{display:flex;align-items:center;gap:3px}
input[type=checkbox]{appearance:none;width:10px;height:10px;margin:0;border:1px solid #999da6;background:#f4f3f4;display:grid;place-items:center}
input:checked::after{content:"";width:2px;height:5px;box-sizing:content-box;border:solid #28456c;border-width:0 1px 1px 0;transform:rotate(40deg)}
input[type=text]{width:43px;height:13px;border:1px solid #99a;background:#f5f4f5;color:#777;font:inherit;padding:0 1px;margin:0}</style>
<header><ui-icon name="pick" size="10"></ui-icon><span>Modify Solid Entity</span><window-buttons dark></window-buttons></header>
<div class="b"><div class="i"><tool-button icon="faceVert" size="18" w="23"></tool-button><tool-button active icon="face" size="18" w="23"></tool-button><tool-button icon="edge" size="18" w="23"></tool-button><tool-button icon="vertex" size="18" w="23"></tool-button></div>
<div class="l"><div class="d"><label><input type="checkbox"><span><u>D</u>istance:</span></label><input type="text" aria-label="Distance" value="2116.00:"></div>
<label><input type="checkbox"><span><u>E</u>xtrude Faces</span></label><label><input type="checkbox" checked><span><u>F</u>ull Dynamics</span></label></div></div>`);

define('coord-field', el => `<style>:host{border-right:1px solid #c5c4c8;padding-right:3px;width:89px}label{display:grid;grid-template-columns:14px 1fr;align-items:center;height:24px;font:bold 12px/14px "Open Sans",sans-serif;color:#222;padding-left:5px}input{font:var(--mono);width:100%;height:13px;border:1px solid #bbbabf;background:#faf9fa;color:#777;margin:0;padding:0 2px}</style><label>${a(el,'axis')}<input value="${a(el,'value')}"></label>`);

define('status-bar', () => `<style>:host{display:flex;align-items:center;height:26px;flex:none;background:#f2f1f3}
.m{display:flex;align-items:center;height:26px;background:var(--bar);padding-left:2px}.h{display:flex;align-items:center;gap:4px;margin-left:3px;padding-right:1px}.h+.h{margin-left:1px}
.sel{width:93px;font:var(--mono);margin-left:2px}.s{width:1px;height:24px;background:#c5c4c8;margin:0 3px}
.n{display:flex}.n button{width:9px;height:14px;border-right:1px solid #444;font:9px/12px "Liberation Sans",sans-serif;background:#eceaec}.n .on{background:#f8dca4}.gr{margin:0 1px 0 3px}</style>
<div class="m"><grip-dots></grip-dots><div class="h"><tool-button icon="back" w="18" h="18" label="Back"></tool-button><drop-arrow></drop-arrow></div><div class="h"><tool-button icon="fwd" w="18" h="18" label="Forward"></tool-button><drop-arrow tone="#777"></drop-arrow></div><div class="h"><tool-button icon="acs" w="18" h="18"></tool-button><drop-arrow></drop-arrow></div>
<drop-select class="sel" icon="views" label="View group" value="Default Views" aw="10"></drop-select><i class="s"></i><tool-button icon="views" size="18" w="20" h="18"></tool-button><i class="s"></i>
<div class="n">${[1,2,3,4,5,6,7,8].map(n=>`<button class="${n===2?'on':''}">${n}</button>`).join('')}</div><i class="s"></i><grip-dots class="gr"></grip-dots>
<coord-field axis="X" value="2094.9564"></coord-field><coord-field axis="Y" value="0.0000"></coord-field><coord-field axis="Z" value="0.0000"></coord-field></div>`);

define('cad-app', () => `<style>:host{height:100vh;display:grid;grid-template-columns:8px 1fr 8px;position:relative}
.l{background:linear-gradient(90deg,#243c57 0 1px,#8ba7c5 1px 3px,#51749c 3px 5px,#27435f 5px 6px,#d9e4ef 6px)}
.r{background:linear-gradient(90deg,#abc9e4 0 2px,#dbe9f6 2px 3px,#86abd0 3px 6px,#223951 6px)}
.c{display:flex;flex-direction:column;min-width:0;min-height:0}.w{flex:1;min-height:0;display:grid;grid-template-columns:173px 1fr;grid-template-rows:minmax(0,1fr);gap:6px;background:#cfd0dc}
modify-dialog{position:absolute;right:7px;bottom:40px}</style>
<div class="l"></div><div class="c"><top-bars></top-bars><div class="w"><task-panel></task-panel><view-window></view-window></div><status-bar></status-bar></div><div class="r"></div><modify-dialog></modify-dialog>`);
</script>
</body>
</html>
